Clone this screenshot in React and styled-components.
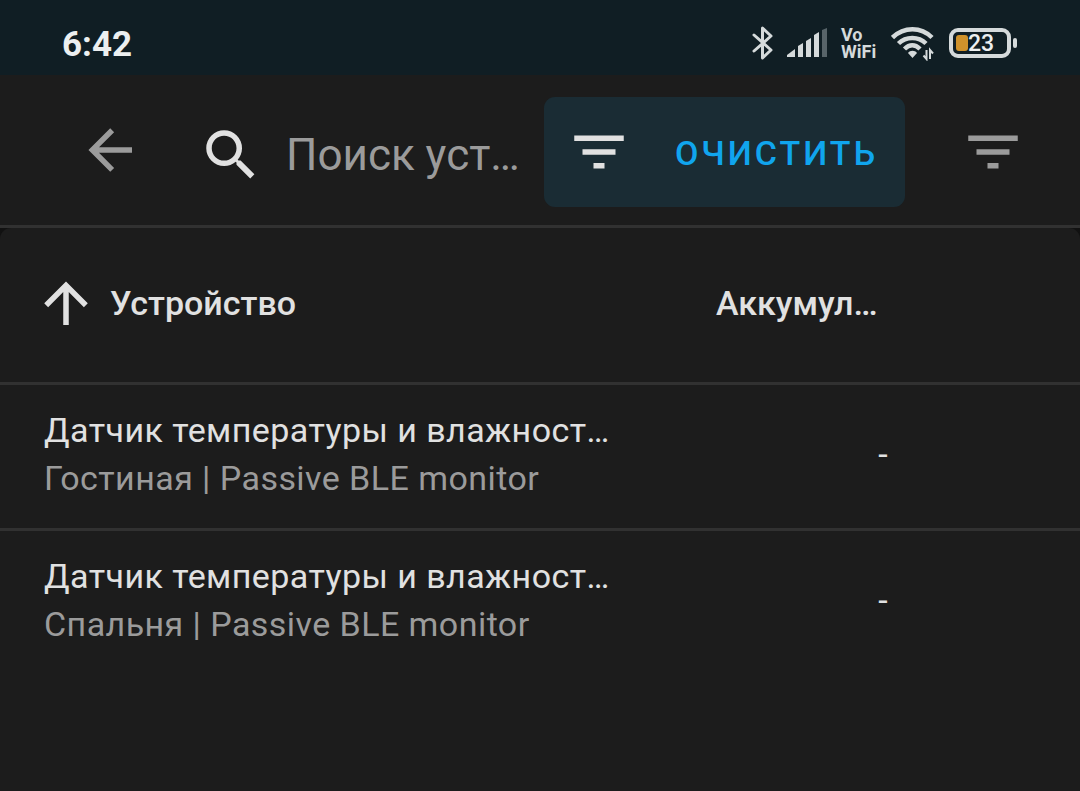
import React from "react"
import styled, { createGlobalStyle } from "styled-components"

const devices = [
  { id: 1, name: "Датчик температуры и влажност…", place: "Гостиная | Passive BLE monitor", battery: "-" },
  { id: 2, name: "Датчик температуры и влажност…", place: "Спальня | Passive BLE monitor", battery: "-" },
]

const FilterIcon = () => (
  <Icon viewBox="0 0 24 24" aria-hidden="true">
    <path d="M6,13H18V11H6M3,6V8H21V6M10,18H14V16H10V18Z" />
  </Icon>
)

const StatusIcons = () => (
  <StatusGroup>
    <svg width="21" height="36" viewBox="0 0 21 36" fill="none" stroke="#d5dadb" strokeWidth="3" strokeLinejoin="round" strokeLinecap="round">
      <path d="M2 10L19 25L10.500 33V3L19 11L2 26" />
    </svg>
    <svg width="40" height="30" viewBox="0 0 40 30" fill="#d5dadb">
      <path d="M0 29V27L8 21V29Z" />
      <path d="M11 29V18L16 15V29Z" />
      <path d="M19 29V13L24 10V29Z" />
      <path d="M27 29V7L32 4V29Z" />
      <path d="M35 29V2L40 0V29Z" fill="#586469" />
    </svg>
    <VoWifi>Vo WiFi</VoWifi>
    <svg width="44" height="36" viewBox="0 0 44 36" fill="none" stroke="#d5dadb" strokeWidth="4.500">
      <path d="M1.500 12.500C13 1.500 30 1.500 41 12.500" />
      <path d="M7.500 18.500C15 11 27.500 11 35 18.500" />
      <path d="M13.500 24C18.500 19 24 19 29 24" />
      <path d="M17 28C19 25 24 25 26 28L21.500 33Z" fill="#d5dadb" stroke="none" />
      <path d="M35.500 25V34L32.500 30.500M39 34V25L42 28.500" strokeWidth="2" />
    </svg>
    <Battery>
      <BatteryBody>
        <BatteryFill />
        <BatteryText>23</BatteryText>
      </BatteryBody>
      <BatteryCap />
    </Battery>
  </StatusGroup>
)

const App = () => (
  <Page>
    <GlobalStyle />
    <StatusBar>
      <Clock>6:42</Clock>
      <StatusIcons />
    </StatusBar>

    <Toolbar>
      <IconButton type="button" aria-label="Назад">
        <Icon viewBox="0 0 24 24" aria-hidden="true">
          <path d="M20,11V13H8L13.5,18.5L12.08,19.92L4.16,12L12.08,4.08L13.5,5.5L8,11H20Z" />
        </Icon>
      </IconButton>
      <Search>
        <Icon viewBox="0 0 24 24" aria-hidden="true">
          <path d="M9.5,3A6.5,6.5 0 0,1 16,9.5C16,11.11 15.41,12.59 14.44,13.73L14.71,14H15.5L20.5,19L19,20.5L14,15.5V14.71L13.73,14.44C12.59,15.41 11.11,16 9.5,16A6.5,6.5 0 0,1 3,9.5A6.5,6.5 0 0,1 9.5,3M9.5,5C7,5 5,7 5,9.5C5,12 7,14 9.5,14C12,14 14,12 14,9.5C14,7 12,5 9.5,5Z" />
        </Icon>
        <SearchInput type="text" aria-label="Поиск" placeholder="Поиск уст…" />
      </Search>
      <Filters>
        <ActiveFilter>
          <FilterIcon />
          <ClearButton type="button">ОЧИСТИТЬ</ClearButton>
        </ActiveFilter>
        <IconButton type="button" aria-label="Фильтр">
          <FilterIcon />
        </IconButton>
      </Filters>
    </Toolbar>

    <TableWrap>
      <Table>
        <colgroup>
          <col />
          <BatteryCol />
          <EndCol />
        </colgroup>
        <thead>
          <tr>
            <HeadCell scope="col">
              <SortButton type="button">
                <SortIcon viewBox="4 4 16 16" aria-hidden="true">
                  <path d="M13,20H11V8L5.5,13.5L4.08,12.08L12,4.16L19.92,12.08L18.5,13.5L13,8V20Z" />
                </SortIcon>
                Устройство
              </SortButton>
            </HeadCell>
            <HeadCell scope="col">Аккумул…</HeadCell>
            <HeadCell as="td" />
          </tr>
        </thead>
        <tbody>
          {devices.map(device => (
            <Row key={device.id}>
              <Cell>
                <DeviceName>{device.name}</DeviceName>
                <DevicePlace>{device.place}</DevicePlace>
              </Cell>
              <Cell $align="right">{device.battery}</Cell>
              <Cell />
            </Row>
          ))}
        </tbody>
      </Table>
    </TableWrap>
  </Page>
)

export default App

const GlobalStyle = createGlobalStyle`
  * {
    box-sizing: border-box;
  }
  body {
    margin: 0;
    background: #1c1c1c;
    color: #e1e1e1;
    font-family: Roboto, "Noto Sans", sans-serif;
  }
  svg {
    display: block;
    flex: none;
  }
`

const Page = styled.main`
  min-height: 100vh;
  background: #1c1c1c;
`

const StatusBar = styled.div`
  display: flex;
  align-items: center;
  justify-content: space-between;
  height: 75px;
  padding: 11px 63px 0 62px;
  background: #101e24;
`

const Clock = styled.span`
  padding-top: 4px;
  font-size: 35px;
  font-weight: 700;
  line-height: 42px;
  color: #eceff0;
`

const StatusGroup = styled.div`
  display: flex;
  align-items: center;
  gap: 14px;
  color: #d5dadb;
`

const VoWifi = styled.span`
  width: 36px;
  font-size: 18px;
  font-weight: 700;
  line-height: 17px;
`

const Battery = styled.div`
  display: flex;
  align-items: center;
  gap: 2px;
`

const BatteryBody = styled.div`
  display: flex;
  align-items: center;
  width: 62px;
  height: 30px;
  padding-left: 3px;
  border: 4px solid #d5dadb;
  border-radius: 9px;
`

const BatteryFill = styled.div`
  width: 12px;
  height: 16px;
  border-radius: 3px;
  background: #d0922b;
`

const BatteryText = styled.span`
  padding-top: 2px;
  font-size: 23px;
  font-weight: 500;
  line-height: 22px;
  color: #eceff0;
`

const BatteryCap = styled.div`
  width: 4px;
  height: 10px;
  border-radius: 2px;
  background: #d5dadb;
`

const Toolbar = styled.header`
  display: flex;
  align-items: center;
  height: 153px;
  padding: 0 54px 0 77px;
  border-bottom: 3px solid #313131;
`

const Icon = styled.svg`
  width: 66px;
  height: 66px;
  fill: currentColor;
`

const Button = styled.button`
  padding: 0;
  border: 0;
  background: none;
  font-family: Roboto, "Noto Sans", sans-serif;
  font-size: 34px;
  font-weight: 500;
`

const IconButton = styled(Button)`
  color: #9b9b9b;
`

const Search = styled.label`
  display: flex;
  flex: 1;
  align-items: center;
  gap: 22px;
  min-width: 0;
  margin: 10px 22px 0 55px;
`

const SearchInput = styled.input`
  flex: 1;
  min-width: 0;
  height: 66px;
  padding: 0;
  border: 0;
  outline: 0;
  background: none;
  color: #e1e1e1;
  font-family: Roboto, "Noto Sans", sans-serif;
  font-size: 44px;
  text-overflow: ellipsis;
  &::placeholder {
    color: #9b9b9b;
    opacity: 1;
  }
`

const Filters = styled.div`
  display: flex;
  align-items: center;
  gap: 55px;
  margin-top: 4px;
`

const ActiveFilter = styled.div`
  display: flex;
  align-items: center;
  height: 110px;
  padding: 0 5px 0 22px;
  border-radius: 11px;
  background: #1a2c34;
`

const ClearButton = styled(Button)`
  height: 88px;
  padding: 2px 22px 0;
  margin-left: 21px;
  letter-spacing: 3px;
  color: #10a5ee;
`

const TableWrap = styled.section`
  background: #111111;
`

const Table = styled.table`
  width: 100%;
  table-layout: fixed;
  border-spacing: 0;
  border-radius: 11px 11px 0 0;
  background: #1c1c1c;
`

const BatteryCol = styled.col`
  width: 260px;
`

const EndCol = styled.col`
  width: 148px;
`

const HeadCell = styled.th`
  height: 157px;
  padding: 0 44px 4px;
  border-bottom: 3px solid #313131;
  font-size: 34px;
  font-weight: 500;
  text-align: left;
  white-space: nowrap;
`

const SortButton = styled(Button)`
  display: flex;
  align-items: center;
  gap: 22px;
  color: #e1e1e1;
`

const SortIcon = styled(Icon)`
  width: 44px;
  height: 44px;
`

const Cell = styled.td`
  padding: 21px 44px 26px;
  font-size: 34px;
  line-height: 48px;
  letter-spacing: 0.013em;
  text-align: ${props => props.$align || "left"};
  white-space: nowrap;
`

const Row = styled.tr`
  &:not(:last-child) ${Cell} {
    border-bottom: 3px solid #313131;
  }
`

const DeviceName = styled.div`
  overflow: hidden;
  text-overflow: ellipsis;
`

const DevicePlace = styled(DeviceName)`
  color: #9b9b9b;
`
